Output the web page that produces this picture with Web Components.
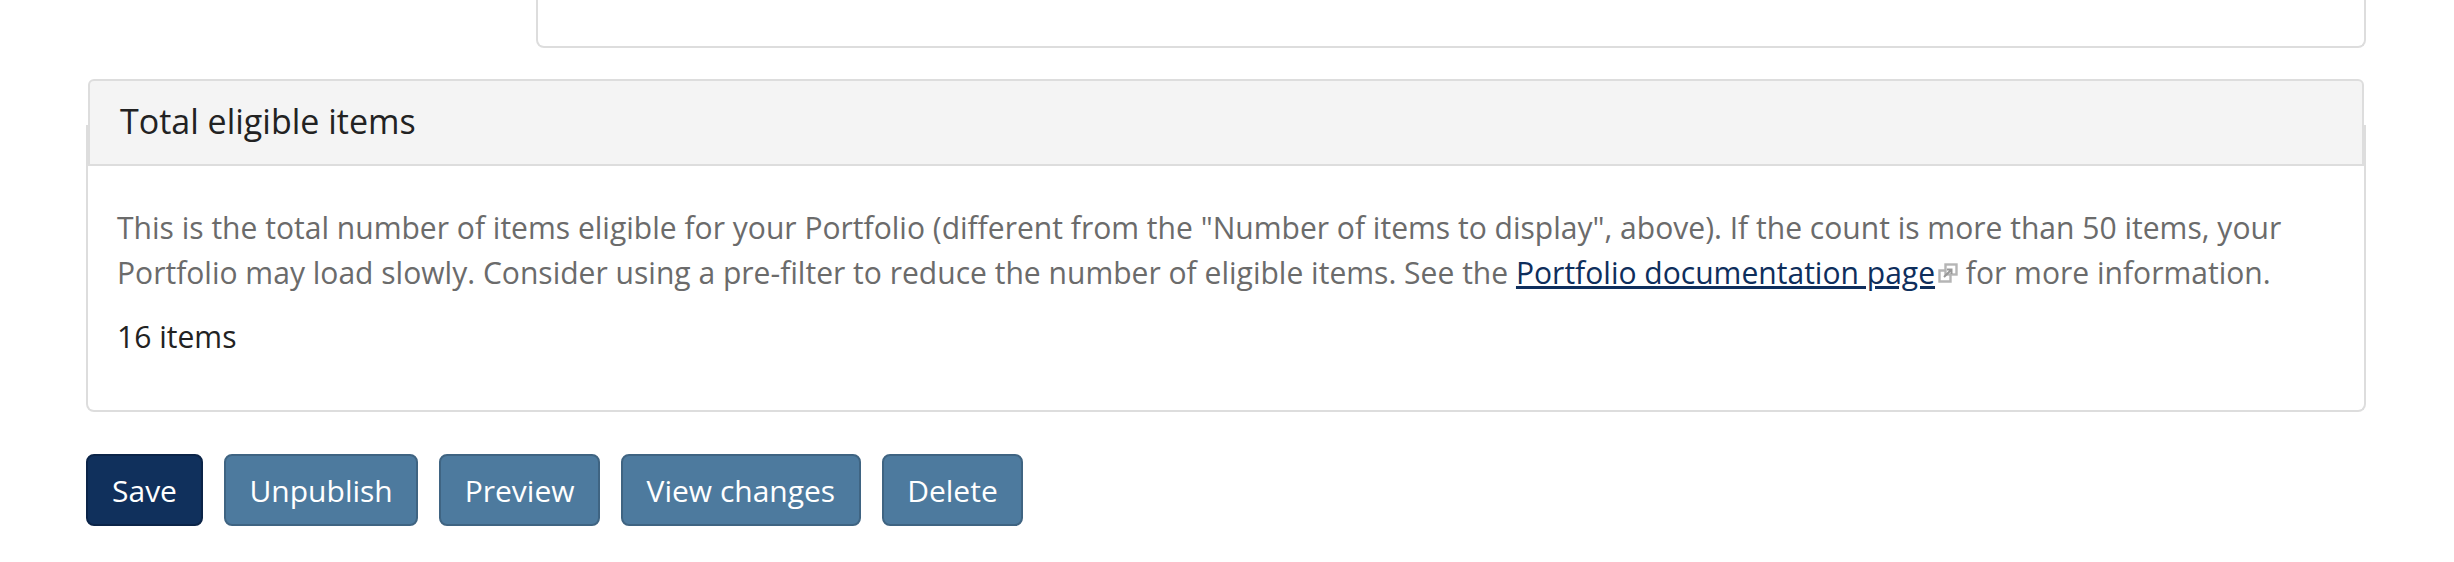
<!DOCTYPE html>
<html>
<head>
<meta charset="utf-8">
<title>Portfolio settings</title>
<style>
    body {
        margin: 0;
        background: #fff;
        font-family: "Open Sans", sans-serif;
    }
</style>
</head>
<body>
<page-shell>
    <top-card></top-card>
    <info-panel heading="Total eligible items">
        <p slot="help">This is the total number of items eligible for your Portfolio (different from the "Number of items to display", above). If the count is more than 50 items, your Portfolio may load slowly. Consider using a pre-filter to reduce the number of eligible items. See the <ext-link href="#">Portfolio documentation page</ext-link> for more information.</p>
        <span slot="value">16 items</span>
    </info-panel>
    <action-bar>
        <action-button primary style="min-width: 117px">Save</action-button>
        <action-button>Unpublish</action-button>
        <action-button>Preview</action-button>
        <action-button>View changes</action-button>
        <action-button>Delete</action-button>
    </action-bar>
</page-shell>

<script>
class PageShell extends HTMLElement {
    constructor() {
        super();
        this.attachShadow({ mode: "open" });
        this.shadowRoot.innerHTML = `
            <style>
                :host {
                    display: block;
                    width: 2454px;
                    height: 562px;
                    padding: 0 88px 0 86px;
                    box-sizing: border-box;
                    overflow: hidden;
                }
            </style>
            <slot></slot>
        `;
    }
}

class TopCard extends HTMLElement {
    constructor() {
        super();
        this.attachShadow({ mode: "open" });
        this.shadowRoot.innerHTML = `
            <style>
                :host {
                    display: block;
                    height: 48px;
                    margin-left: 450px;
                    box-sizing: border-box;
                    background: #fff;
                    border: 2px solid #ddd;
                    border-top: none;
                    border-radius: 0 0 8px 8px;
                }
            </style>
        `;
    }
}

class InfoPanel extends HTMLElement {
    constructor() {
        super();
        this.attachShadow({ mode: "open" });
        this.shadowRoot.innerHTML = `
            <style>
                :host {
                    display: flow-root;
                    margin-top: 77px;
                    height: 287px;
                    box-sizing: border-box;
                    background: #fff;
                    border: 2px solid #ddd;
                    border-top: none;
                    border-radius: 0 0 8px 8px;
                    color: #222;
                }
                h3 {
                    margin: -46px 0 0 0;
                    height: 87px;
                    box-sizing: border-box;
                    padding: 0 30px 4px;
                    display: flex;
                    align-items: center;
                    background: #f4f4f4;
                    border: 2px solid #ddd;
                    border-radius: 6px 6px 0 0;
                    font-weight: 400;
                    font-size: 34px;
                }
                .body {
                    padding: 39px 29px 24px;
                    font-size: 30.05px;
                    line-height: 45px;
                }
                ::slotted(p) {
                    margin: 0 0 19px;
                    color: #6b6b6b;
                }
            </style>
            <h3></h3>
            <div class="body">
                <slot name="help"></slot>
                <slot name="value"></slot>
            </div>
        `;
        this.shadowRoot.querySelector("h3").textContent = this.getAttribute("heading");
    }
}

class ExtLink extends HTMLElement {
    constructor() {
        super();
        this.attachShadow({ mode: "open" });
        this.shadowRoot.innerHTML = `
            <style>
                :host { display: inline; }
                a { color: #0e2e5c; text-decoration: underline; }
                svg { width: 20px; height: 20px; margin-left: 3px; vertical-align: 1px; }
            </style>
            <a><slot></slot></a><svg viewBox="0 0 20 20" fill="none" stroke="#b5b5b5" stroke-width="2.4">
                <rect x="7.5" y="1.5" width="11" height="10"/>
                <path d="M7.5 7.5h-6v11h11v-7"/>
                <path d="M6 14l7-7M9 6.5h4.5V11" stroke="#999" stroke-width="2"/>
            </svg>
        `;
        this.shadowRoot.querySelector("a").href = this.getAttribute("href");
    }
}

class ActionBar extends HTMLElement {
    constructor() {
        super();
        this.attachShadow({ mode: "open" });
        this.shadowRoot.innerHTML = `
            <style>
                :host {
                    display: flex;
                    gap: 21px;
                    margin-top: 42px;
                }
            </style>
            <slot></slot>
        `;
    }
}

class ActionButton extends HTMLElement {
    constructor() {
        super();
        this.attachShadow({ mode: "open" });
        this.shadowRoot.innerHTML = `
            <style>
                :host {
                    display: flex;
                    align-items: center;
                    justify-content: center;
                    height: 72px;
                    box-sizing: border-box;
                    padding: 0 23.5px;
                    background: #4d7a9e;
                    border: 2px solid #3f6482;
                    border-radius: 8px;
                    color: #fff;
                    font-size: 30px;
                }
                :host([primary]) {
                    background: #10305c;
                    border-color: #0b2448;
                }
            </style>
            <slot></slot>
        `;
    }
}

window.customElements.define("page-shell", PageShell);
window.customElements.define("top-card", TopCard);
window.customElements.define("info-panel", InfoPanel);
window.customElements.define("ext-link", ExtLink);
window.customElements.define("action-bar", ActionBar);
window.customElements.define("action-button", ActionButton);
</script>
</body>
</html>
